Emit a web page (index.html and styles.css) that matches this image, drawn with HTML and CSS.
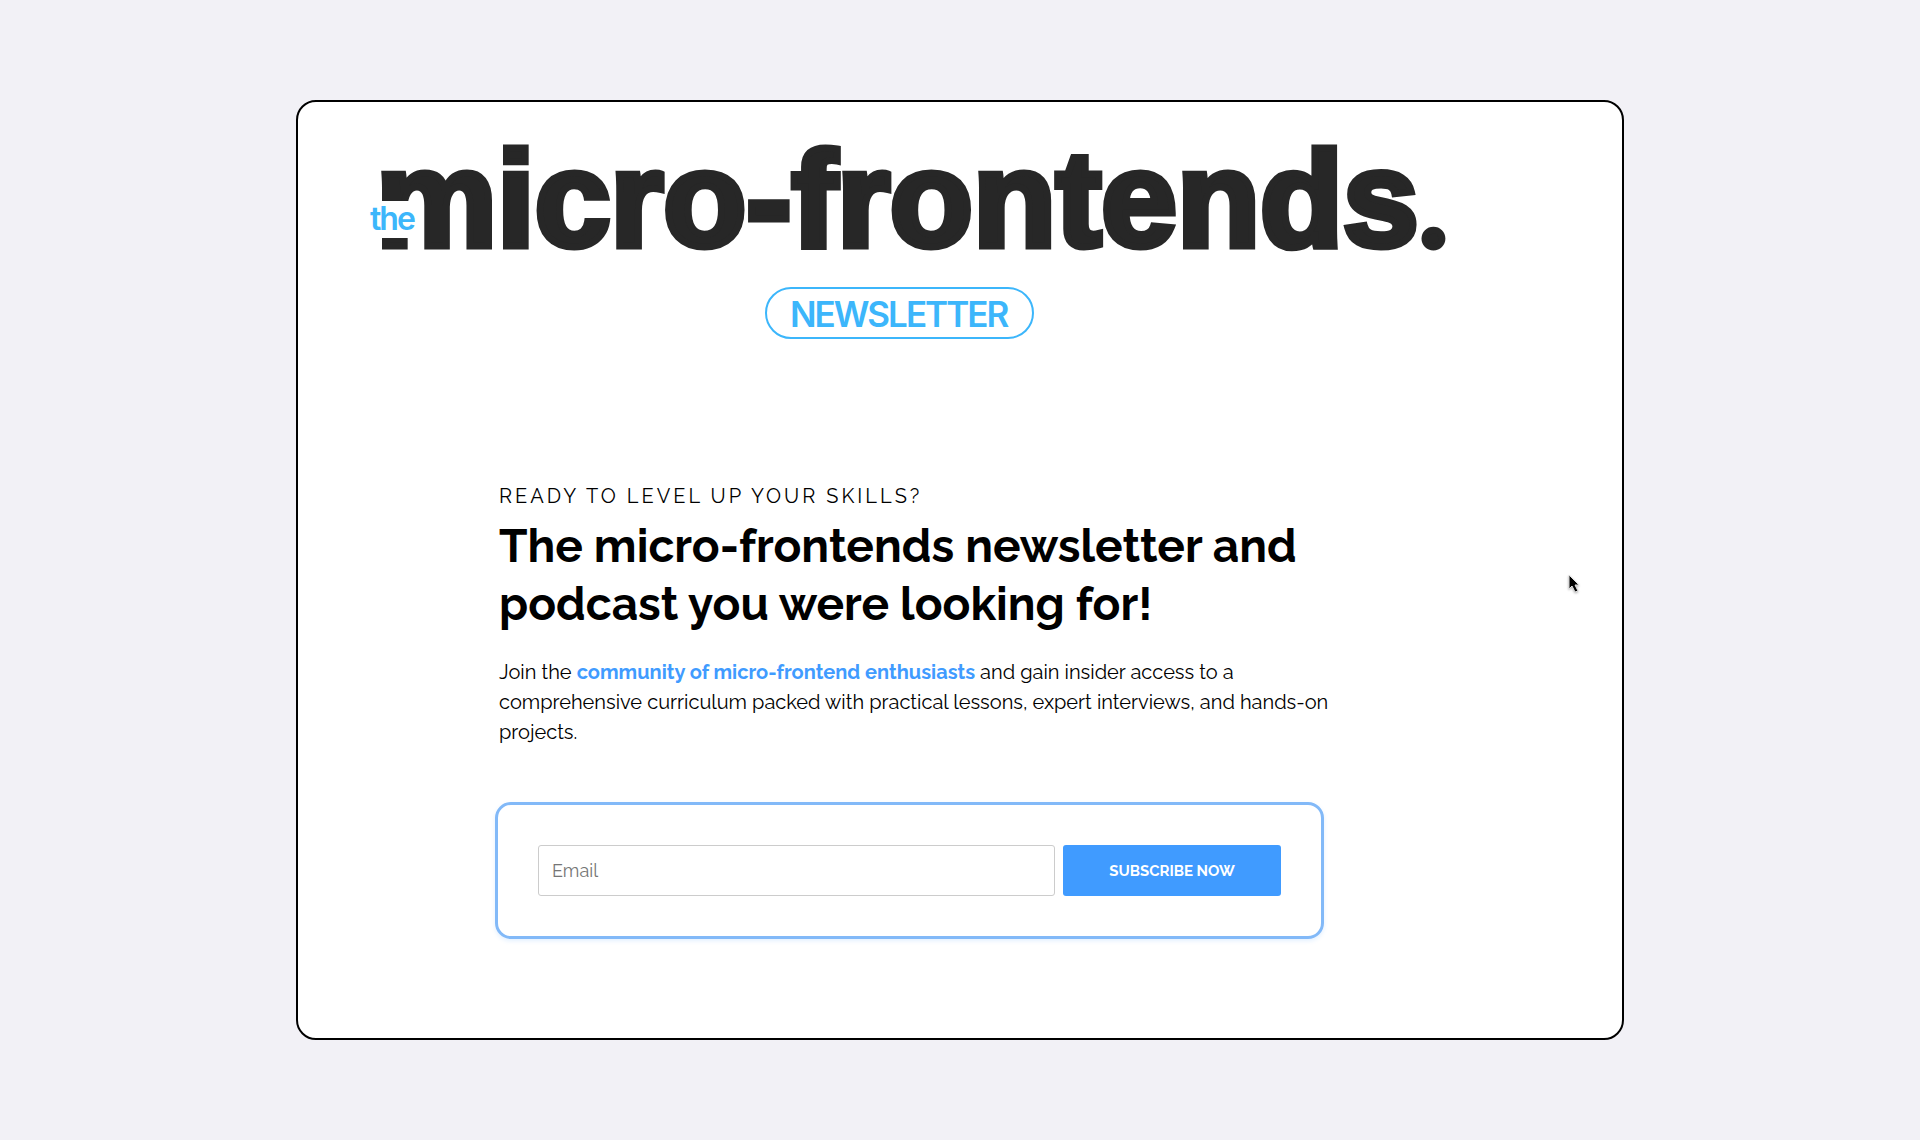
FILE: index.html
```html
<!DOCTYPE html>
<html lang="en">
<head>
    <meta charset="UTF-8">
    <meta name="viewport" content="width=device-width, initial-scale=1.0">
    <title>The micro-frontends newsletter</title>
    <link rel="stylesheet" href="styles.css">
</head>
<body>
    <main class="card">
        <header class="brand">
            <svg class="logo" viewBox="0 0 1080 198" role="img" aria-label="the micro-frontends. newsletter">
                <text class="logo-name" x="6" y="104">micro-frontends<tspan class="logo-dot" dx="-2">.</tspan></text>
                <rect x="0" y="59" width="50" height="37" fill="#fff"/>
                <text class="logo-the" x="0" y="88">the</text>
                <rect class="logo-pill" x="396" y="146" width="267" height="50" rx="25"/>
                <text class="logo-tag" x="420" y="185">NEWSLETTER</text>
            </svg>
        </header>

        <section class="content">
            <p class="eyebrow">Ready to level up your skills?</p>
            <h1>The micro-frontends newsletter and podcast you were looking for!</h1>
            <p class="intro">Join the <strong>community of micro-frontend enthusiasts</strong> and gain insider access to a comprehensive curriculum packed with practical lessons, expert interviews, and hands-on projects.</p>

            <form class="subscribe">
                <input type="email" class="email" placeholder="Email" aria-label="Email">
                <button type="submit" class="btn">Subscribe now</button>
            </form>
        </section>

        <!-- mouse pointer -->
        <svg class="pointer" viewBox="0 0 14 20" aria-hidden="true">
            <path d="M1 1v14l3-3 3 6 3-1-3-6h4z" fill="#000" stroke="#ddd" stroke-width="1"/>
        </svg>
    </main>
</body>
</html>
```

FILE: styles.css
```css
:root {
    --primary: #409bff;
    --primary-light: #82b9f8;
    --logo-blue: #3cb6fb;
    --logo-dark: #272727;
    --bg: #f2f1f6;
}

* {
    box-sizing: border-box;
}

body {
    font-family: Raleway, Lato, sans-serif;
    background: var(--bg);
    color: #000;
    margin: 0;
    padding: 100px 20px;
}

.card {
    position: relative;
    max-width: 1328px;
    margin: 0 auto;
    padding: 40px 104px 99px 72px;
    background: #fff;
    border: 2px solid #000;
    border-radius: 20px;
}

.logo {
    display: block;
    width: 100%;
    max-width: 1080px;
    overflow: visible;
}

/* the outline makes the bold face extra heavy */
.logo-name {
    font-family: "Liberation Sans", Arial, sans-serif;
    font-size: 136px;
    font-weight: 700;
    fill: var(--logo-dark);
    stroke: var(--logo-dark);
    stroke-width: 7;
}

.logo-dot {
    font-family: Inter, sans-serif;
    font-size: 100px;
}

.logo-the,
.logo-tag {
    font-family: Inter, sans-serif;
    font-weight: 600;
    letter-spacing: -2px;
    fill: var(--logo-blue);
}

.logo-the {
    font-size: 32px;
}

.logo-tag {
    font-size: 35px;
}

.logo-pill {
    fill: none;
    stroke: var(--logo-blue);
    stroke-width: 2;
}

.content {
    max-width: 840px;
    margin: 141px 0 0 125px;
}

.eyebrow,
h1,
.intro {
    margin: 0;
    padding: 0 4px;
}

.eyebrow {
    font-size: 20px;
    line-height: 30px;
    letter-spacing: 3px;
    text-transform: uppercase;
}

h1 {
    margin-top: 6px;
    font-size: 46px;
    line-height: 58px;
}

.intro {
    margin-top: 24px;
    font-size: 20px;
    line-height: 30px;
}

.intro strong {
    color: var(--primary);
}

.subscribe {
    display: flex;
    gap: 8px;
    max-width: 829px;
    margin-top: 55px;
    padding: 40px;
    border: 3px solid var(--primary-light);
    border-radius: 16px;
    box-shadow: 0 2px 4px rgba(64, 155, 255, 0.15);
}

.email,
.btn {
    height: 51px;
    border-radius: 3px;
    font-family: inherit;
}

.email {
    flex: 1;
    min-width: 0;
    padding: 0 13px;
    border: 1px solid #ccc;
    font-size: 18px;
}

.email::placeholder {
    color: #757575;
}

.btn {
    width: 218px;
    border: none;
    background: var(--primary);
    color: #fff;
    font-size: 15px;
    font-weight: 700;
    text-transform: uppercase;
    cursor: pointer;
}

.pointer {
    position: absolute;
    top: 472px;
    right: 40px;
    width: 14px;
    height: 20px;
    filter: drop-shadow(0 1px 1px rgba(0, 0, 0, 0.3));
}

@media (max-width: 1100px) {
    .card {
        padding: 40px 30px;
    }

    .content {
        margin-left: 0;
    }
}
```
